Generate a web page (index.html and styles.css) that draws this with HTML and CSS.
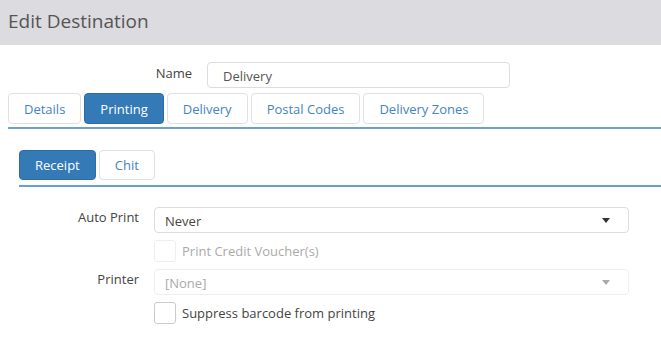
FILE: index.html
```html
<!DOCTYPE html>
<html>
  <head>
    <title>Edit Destination</title>
    <link rel="stylesheet" href="styles.css">
  </head>
  <body>
    <div class="header">Edit Destination</div>

    <div class="content">
      <div class="name-row">
        <label class="name-label">Name</label>
        <input class="name-input" type="text" value="Delivery">
      </div>

      <div class="tabs">
        <div class="tab">Details</div>
        <div class="tab active">Printing</div>
        <div class="tab">Delivery</div>
        <div class="tab">Postal Codes</div>
        <div class="tab">Delivery Zones</div>
      </div>

      <div class="panel">
        <div class="tabs sub">
          <div class="tab active">Receipt</div>
          <div class="tab">Chit</div>
        </div>

        <div class="form">
          <div class="form-row">
            <div class="label">Auto Print</div>
            <div class="select">
              <span>Never</span>
              <span class="caret"></span>
            </div>
          </div>
          <div class="form-row">
            <div class="label"></div>
            <div class="check disabled">
              <span class="box"></span>
              <span>Print Credit Voucher(s)</span>
            </div>
          </div>
          <div class="form-row">
            <div class="label">Printer</div>
            <div class="select disabled">
              <span>[None]</span>
              <span class="caret"></span>
            </div>
          </div>
          <div class="form-row">
            <div class="label"></div>
            <div class="check">
              <span class="box"></span>
              <span>Suppress barcode from printing</span>
            </div>
          </div>
        </div>
      </div>
    </div>
  </body>
</html>
```

FILE: styles.css
```css
body {
  margin: 0;
  font-family: "Open Sans", sans-serif;
  font-size: 13px;
  color: #444;
  background: white;
}
.header {
  height: 45px;
  background: #dcdbe0;
  color: #555;
  font-size: 19px;
  padding-left: 8px;
  padding-bottom: 4px;
  box-sizing: border-box;
  display: flex;
  align-items: center;
}
.content {
  padding-left: 8px;
}
.name-row {
  display: flex;
  align-items: center;
  margin-top: 17px;
}
.name-label {
  width: 184px;
  text-align: right;
  margin-right: 15px;
  margin-top: -4px;
}
.name-input {
  width: 303px;
  height: 26px;
  box-sizing: border-box;
  border: 1px solid #ddd;
  border-radius: 4px;
  padding: 2px 15px 0;
  font-family: inherit;
  font-size: 13px;
  color: #555;
  outline: none;
}
.tabs {
  display: flex;
  gap: 3px;
  margin-top: 5px;
  padding-bottom: 3px;
  border-bottom: 2px solid #6a9fd2;
}
.tab {
  height: 31px;
  box-sizing: border-box;
  padding: 0 15px;
  display: flex;
  align-items: center;
  border: 1px solid #e0e0e0;
  border-radius: 4px;
  color: #4285c6;
}
.tab.active {
  background: #337ab7;
  border-color: #2e6da4;
  color: white;
}
.panel {
  margin-left: 11px;
  margin-top: 21px;
}
.tabs.sub {
  margin-top: 0;
  padding-bottom: 5px;
}
.tabs.sub .tab {
  height: 30px;
}
.form {
  margin-top: 20px;
  display: flex;
  flex-direction: column;
  gap: 7px;
}
.form-row {
  display: flex;
  align-items: center;
}
.label {
  width: 120px;
  text-align: right;
  margin-right: 15px;
  margin-top: -6px;
}
.select {
  width: 475px;
  height: 26px;
  box-sizing: border-box;
  border: 1px solid #ddd;
  border-radius: 4px;
  padding: 2px 10px 0;
  display: flex;
  align-items: center;
  justify-content: space-between;
  color: #444;
}
.select.disabled {
  border-color: #eee;
  color: #aaa;
}
.caret {
  width: 0;
  height: 0;
  border-left: 4px solid transparent;
  border-right: 4px solid transparent;
  border-top: 5px solid #333;
  margin-right: 8px;
  margin-top: -2px;
}
.select.disabled .caret {
  border-top-color: #aaa;
}
.check {
  display: flex;
  align-items: center;
  gap: 6px;
}
.box {
  width: 22px;
  height: 22px;
  box-sizing: border-box;
  border: 1px solid #ccc;
  border-radius: 3px;
}
.check.disabled {
  color: #aaa;
}
.check.disabled .box {
  border-color: #eee;
}
```
